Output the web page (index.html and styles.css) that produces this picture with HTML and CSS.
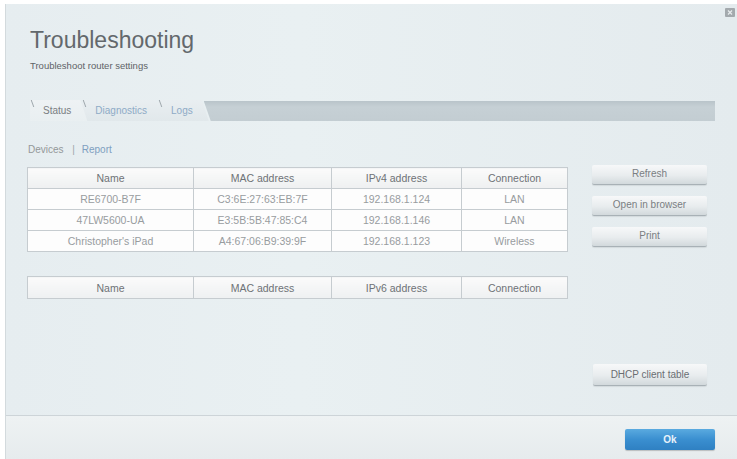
FILE: index.html
```html
<!DOCTYPE html>
<html lang="en">
<head>
    <meta charset="UTF-8">
    <meta name="viewport" content="width=device-width, initial-scale=1.0">
    <title>Troubleshooting</title>
    <link rel="stylesheet" href="styles.css">
</head>
<body>
    <div class="dialog">
        <button class="close-button" title="Close">
            <svg width="10" height="9" viewBox="0 0 10 9">
                <rect x="0" y="0" width="10" height="9" rx="1" fill="#a3a9ad"></rect>
                <path d="M3 2.5l4 4M7 2.5l-4 4" stroke="#e8ecee" stroke-width="1.2"></path>
            </svg>
        </button>
        <div class="content">
            <h1>Troubleshooting</h1>
            <p class="subtitle">Troubleshoot router settings</p>

            <div class="tabs">
                <div class="tab active">Status</div>
                <div class="tab">Diagnostics</div>
                <div class="tab">Logs</div>
                <div class="tab-fill"></div>
            </div>

            <div class="status">
                <div class="sub-links">
                    <span class="sub-link current">Devices</span>
                    <span class="divider">|</span>
                    <span class="sub-link">Report</span>
                </div>

                <div class="panel">
                    <div class="tables">
                        <table class="device-table">
                            <thead>
                                <tr><th>Name</th><th>MAC address</th><th>IPv4 address</th><th>Connection</th></tr>
                            </thead>
                            <tbody>
                                <tr><td>RE6700-B7F</td><td>C3:6E:27:63:EB:7F</td><td>192.168.1.124</td><td>LAN</td></tr>
                                <tr><td>47LW5600-UA</td><td>E3:5B:5B:47:85:C4</td><td>192.168.1.146</td><td>LAN</td></tr>
                                <tr><td>Christopher's iPad</td><td>A4:67:06:B9:39:9F</td><td>192.168.1.123</td><td>Wireless</td></tr>
                            </tbody>
                        </table>

                        <table class="device-table ipv6">
                            <thead>
                                <tr><th>Name</th><th>MAC address</th><th>IPv6 address</th><th>Connection</th></tr>
                            </thead>
                        </table>
                    </div>

                    <div class="actions">
                        <button class="btn">Refresh</button>
                        <button class="btn">Open in browser</button>
                        <button class="btn">Print</button>
                        <button class="btn dhcp">DHCP client table</button>
                    </div>
                </div>
            </div>
        </div>

        <div class="footer">
            <button class="ok-button">Ok</button>
        </div>
    </div>
</body>
</html>
```

FILE: styles.css
```css
body {
    margin: 0;
    padding: 4px 0 0 0;
    background-color: #ffffff;
    font-family: 'Liberation Sans', Arial, sans-serif;
    color: #666;
    overflow: hidden;
}
.dialog {
    position: relative;
    height: calc(100vh - 4px);
    margin-left: 5px;
    display: flex;
    flex-direction: column;
    background: linear-gradient(90deg, #e6edf0 0%, #e9f0f2 40%, #e4ebee 100%);
    border-left: 1px solid #d3dadd;
    box-sizing: border-box;
}
.close-button {
    position: absolute;
    top: 4px;
    right: 2px;
    padding: 0;
    border: none;
    background: none;
    line-height: 0;
    cursor: pointer;
}
.content {
    flex: 1;
    display: flex;
    flex-direction: column;
    padding: 23px 22px 29px 21px;
}
h1 {
    margin: 0 0 0 3px;
    font-size: 23px;
    line-height: 26px;
    font-weight: normal;
    color: #63686c;
}
.subtitle {
    margin: 7px 0 0 3px;
    font-size: 9.5px;
    line-height: 12px;
    color: #5e6266;
}
.tabs {
    display: flex;
    height: 21px;
    margin: 28px 0 0 3px;
}
.tab {
    position: relative;
    padding: 0 16px 0 13px;
    font-size: 10px;
    line-height: 21px;
    color: #8eaac6;
    background: linear-gradient(#e9eef1, #e1e8eb);
    clip-path: polygon(0 0, calc(100% - 7px) 0, 100% 100%, 0 100%);
    margin-right: -5px;
}
.tab.active {
    color: #7a7e82;
    background: linear-gradient(#eef2f4, #e9eff1);
    z-index: 2;
}
/* small slanted tick where one tab meets the next */
.tab::before {
    content: '';
    position: absolute;
    left: 2px;
    top: 0;
    width: 1px;
    height: 7px;
    background: #9ea7ac;
    transform: skewX(20deg);
}
.tab-fill {
    flex: 1;
    margin-top: 1px;
    background: linear-gradient(#b9c4ca, #c6d0d5 30%, #c3cdd2);
    clip-path: polygon(0 0, 100% 0, 100% 100%, 7px 100%);
}
.status {
    flex: 1;
    display: flex;
    flex-direction: column;
}
.sub-links {
    margin: 23px 0 0 1px;
    font-size: 10px;
    line-height: 12px;
}
.sub-link {
    color: #7f9fc0;
}
.sub-link.current {
    color: #949899;
}
.divider {
    color: #a0a5a8;
    margin: 0 4px 0 6px;
}
.panel {
    flex: 1;
    display: flex;
    gap: 24px;
    margin-top: 9px;
}
.tables {
    width: 541px;
    padding-top: 2px;
}
.device-table {
    width: 541px;
    border-collapse: collapse;
    table-layout: fixed;
    background-color: #fdfdfd;
    border: 1px solid #b5bcc0;
}
.device-table th,
.device-table td {
    border: 1px solid #c6ccd0;
    padding: 0;
    text-align: center;
    font-size: 10.5px;
    font-weight: normal;
}
.device-table th:nth-child(1) { width: 165px; }
.device-table th:nth-child(2) { width: 137px; }
.device-table th:nth-child(3) { width: 129px; }
.device-table th {
    height: 20px;
    color: #6e7276;
    background: linear-gradient(#fbfbfb, #eef0f1);
}
.device-table td {
    height: 20px;
    color: #989c9f;
}
.device-table.ipv6 {
    margin-top: 24px;
}
.device-table.ipv6 th {
    height: 21px;
}
.actions {
    width: 115px;
    display: flex;
    flex-direction: column;
}
.btn {
    height: 20px;
    margin-bottom: 11px;
    padding: 0 0 3px 0;
    border: none;
    border-bottom: 1px solid #a8b1b6;
    border-radius: 2px;
    background: linear-gradient(#f7f8f9, #e8ecee 55%, #d2d9dc);
    box-shadow: 0 1px 1px rgba(0, 0, 0, 0.08);
    font-family: inherit;
    font-size: 10px;
    color: #7a7e82;
    cursor: pointer;
}
.btn.dhcp {
    height: 22px;
    margin: auto 0 0 1px;
    padding-bottom: 0;
    width: 114px;
    color: #6a6e72;
}
.footer {
    height: 43px;
    display: flex;
    justify-content: flex-end;
    align-items: flex-start;
    border-top: 1px solid #cdd4d8;
    background: linear-gradient(#eef2f3, #e6ebed);
}
.ok-button {
    width: 90px;
    height: 21px;
    margin: 13px 22px 0 0;
    border: none;
    border-radius: 2px;
    background: linear-gradient(#5aaae0, #3a8fd0 50%, #2f80c2);
    box-shadow: 0 1px 1px rgba(0, 0, 0, 0.2);
    font-family: inherit;
    font-size: 10px;
    font-weight: bold;
    color: #e8f2fa;
    cursor: pointer;
}
```
